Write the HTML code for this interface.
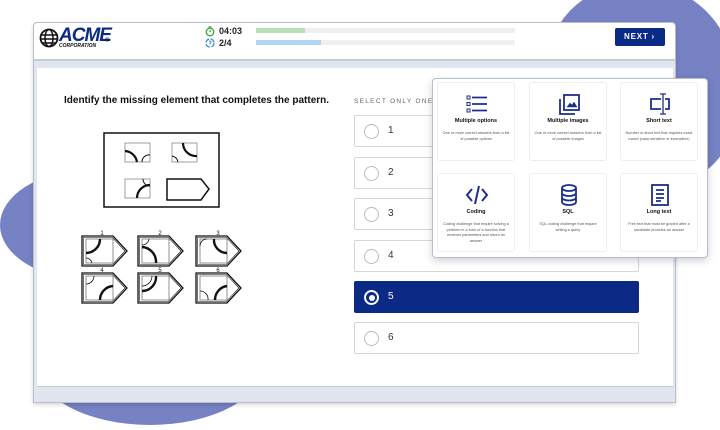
<!DOCTYPE html>
<html><head><style>
*{margin:0;padding:0;box-sizing:border-box}
body{width:720px;height:430px;overflow:hidden;background:#fff;font-family:"Liberation Sans",sans-serif;position:relative}
.abs{position:absolute}
.blob{position:absolute;background:#7682c4;border-radius:50%}
.opt{position:absolute;left:354px;width:285px;height:32px;border:1px solid #d6d6d6;border-radius:2px;background:#fff;font-size:10px;color:#333}
.opt .r{position:absolute;left:9px;top:8px;width:15px;height:15px;border:1.5px solid #bbb;border-radius:50%}
.opt span{position:absolute;left:33px;top:9px}
.card{position:absolute;width:78px;height:79px;border:1px solid #eceef2;border-radius:3px;background:#fff;text-align:center}
.card svg{position:absolute;left:27px;top:10px}
.card b{position:absolute;top:35px;left:0;right:0;font-size:5.5px;color:#111}
.card p{position:absolute;top:48px;left:4px;right:4px;font-size:3.8px;color:#555;line-height:5.5px}
</style></head><body>
<div class="blob" style="left:545px;top:-15px;width:190px;height:200px;border-radius:48% 52% 40% 60%"></div>
<div class="blob" style="left:0;top:170px;width:180px;height:110px"></div>
<div class="blob" style="left:35px;top:300px;width:230px;height:125px"></div>
<div class="abs" style="left:33px;top:22px;width:643px;height:381px;background:#e1e5ef;border:1px solid #b8bccb;border-radius:4px 4px 0 0;box-shadow:0 2px 4px rgba(0,0,0,.15)"></div>
<div class="abs" style="left:34px;top:23px;width:641px;height:38px;background:#fff;border-bottom:2px solid #c8cbd3;border-radius:4px 4px 0 0"></div>
<div class="abs" style="left:37px;top:68px;width:636px;height:319px;background:#fff;border-bottom:1px solid #c8c8c8"></div>
<svg class="abs" style="left:39px;top:28px" width="20" height="20" viewBox="0 0 20 20"><circle cx="10" cy="10" r="8.5" fill="none" stroke="#111" stroke-width="1.8"/><ellipse cx="10" cy="10" rx="4" ry="8.5" fill="none" stroke="#111" stroke-width="1.5"/><path d="M2 7H18M1.5 11H18.5M3 15H17" stroke="#111" stroke-width="1.5"/></svg>
<div class="abs" style="left:59px;top:25px;font:italic 900 19px 'Liberation Sans';color:#0b2a86;letter-spacing:-1px">ACME</div>
<div class="abs" style="left:105px;top:38px;font-size:6px;color:#111">®</div>
<div class="abs" style="left:59px;top:43px;font:italic bold 5px 'Liberation Sans';color:#111">CORPORATION</div>
<svg class="abs" style="left:205px;top:26px" width="10" height="11" viewBox="0 0 10 11"><circle cx="5" cy="6" r="3.8" fill="none" stroke="#3da23d" stroke-width="1.3"/><path d="M3.5 1H6.5M5 4V6" stroke="#3da23d" stroke-width="1.2"/></svg>
<div class="abs" style="left:219px;top:26px;font-size:9px;font-weight:bold;color:#222">04:03</div>
<svg class="abs" style="left:205px;top:38px" width="10" height="10" viewBox="0 0 10 10"><circle cx="5" cy="5" r="4" fill="none" stroke="#3c8fdc" stroke-width="1.3" stroke-dasharray="5 1.5"/><path d="M4 3.5Q5 2.5 6 3.5Q6 5 5 5.5V6.5" stroke="#3c8fdc" fill="none"/></svg>
<div class="abs" style="left:219px;top:38px;font-size:9px;font-weight:bold;color:#222">2/4</div>
<div class="abs" style="left:256px;top:28px;width:259px;height:5px;background:#f0f0f0"></div>
<div class="abs" style="left:256px;top:28px;width:49px;height:5px;background:#b9dfb4"></div>
<div class="abs" style="left:256px;top:40px;width:259px;height:5px;background:#f0f0f0"></div>
<div class="abs" style="left:256px;top:40px;width:65px;height:5px;background:#b0d4f6"></div>
<div class="abs" style="left:615px;top:28px;width:50px;height:18px;background:#0b2a86;border-radius:2px;color:#fff;font-size:8px;font-weight:bold;letter-spacing:.8px;line-height:18px;padding-left:9px">NEXT ›</div>
<div class="abs" style="left:64px;top:95px;font-size:10px;font-weight:bold;color:#111">Identify the missing element that completes the pattern.</div>
<div class="abs" style="left:354px;top:98px;font-size:6.5px;color:#666;letter-spacing:1.3px">SELECT ONLY ONE</div>
<svg class="abs" style="left:70px;top:125px" width="190" height="185" viewBox="0 0 190 185">
<defs><g id="t" fill="none"><path d="M0 0H31L45 15L31 30H0Z" stroke="#111" stroke-width="1.3"/><path d="M1.5 1.5H30.4L43 15L30.4 28.5H1.5Z" stroke="#111" stroke-width=".6"/><rect x="4" y="3" width="27" height="24" stroke="#888" stroke-width=".9"/></g></defs>
<g fill="none" stroke="#111">
<rect x="34" y="8" width="115" height="74" stroke-width="1.5"/>
<g stroke="#888" stroke-width=".8"><rect x="55" y="18" width="25" height="19"/><rect x="102" y="18" width="25" height="19"/><rect x="55" y="54" width="25" height="19"/></g>
<path d="M55 26A13 13 0 0 1 67 37" stroke-width="2.2"/><path d="M72 37A7 7 0 0 1 80 30"/>
<path d="M113 18A13 13 0 0 0 127 31" stroke-width="2.2"/><path d="M102 31A7 7 0 0 1 108 37"/>
<path d="M67 73A13 13 0 0 1 80 60" stroke-width="2.2"/><path d="M73 54A7 7 0 0 0 80 61"/>
<path d="M97 54H131L139 64L131 75H97Z" stroke-width="1.5"/>
</g>
<use href="#t" x="12" y="111"/><use href="#t" x="68" y="111"/><use href="#t" x="126" y="111"/>
<use href="#t" x="12" y="148"/><use href="#t" x="68" y="148"/><use href="#t" x="126" y="148"/>
<g fill="none" stroke="#111">
<path d="M30 114A14 14 0 0 1 16 128" stroke-width="2.4"/><path d="M16 133A6 6 0 0 1 22 138" stroke-width=".8"/>
<path d="M72 122A15 15 0 0 1 86 138" stroke-width="2.4"/><path d="M72 120A7 7 0 0 0 79 114" stroke-width=".8"/>
<path d="M144 114A13 13 0 0 0 157 128" stroke-width="2.4"/><path d="M130 121A7 7 0 0 1 137 114" stroke-width=".8"/>
<path d="M30 175A14 14 0 0 1 43 161" stroke-width="2.4"/><path d="M16 159A8 8 0 0 0 24 151" stroke-width=".8"/>
<path d="M86 151A14 14 0 0 1 72 166" stroke-width="2.4"/><path d="M82 151A10 10 0 0 1 72 161" stroke-width=".8"/>
<path d="M145 175A14 14 0 0 1 157 161" stroke-width="2.4"/><path d="M130 166A8 8 0 0 1 138 175" stroke-width=".8"/>
</g>
<g font-size="6" fill="#111" font-family="Liberation Sans" text-anchor="middle"><text x="32" y="110">1</text><text x="90" y="110">2</text><text x="148" y="110">3</text><text x="32" y="147">4</text><text x="90" y="147">5</text><text x="148" y="147">6</text></g>
</svg>
<div class="opt" style="top:115px"><div class="r"></div><span>1</span></div>
<div class="opt" style="top:157px"><div class="r"></div><span>2</span></div>
<div class="opt" style="top:198px"><div class="r"></div><span>3</span></div>
<div class="opt" style="top:240px"><div class="r"></div><span>4</span></div>
<div class="opt" style="top:281px;background:#0b2a86;border-color:#0b2a86;color:#fff"><div class="r" style="border:2px solid #fff"><div style="position:absolute;left:2.5px;top:2.5px;width:6px;height:6px;border-radius:50%;background:#fff"></div></div><span>5</span></div>
<div class="opt" style="top:322px"><div class="r"></div><span>6</span></div>
<div class="abs" style="left:432px;top:78px;width:276px;height:180px;background:#fff;border:1px solid #b8bdd4;border-radius:4px;box-shadow:0 3px 8px rgba(0,0,0,.18)"></div>
<div class="card" style="left:437px;top:82px"><svg width="24" height="22" viewBox="0 0 24 22" fill="none" stroke="#1c2f8a" stroke-width="1.8"><rect x="2" y="3" width="3" height="3" stroke-width="1"/><rect x="2" y="9.5" width="3" height="3" stroke-width="1"/><rect x="2" y="16" width="3" height="3" stroke-width="1"/><path d="M7 4.5H22M7 11H22M7 17.5H22"/></svg><b>Multiple options</b><p>One or more correct answers from a list of possible options</p></div>
<div class="card" style="left:529px;top:82px"><svg width="24" height="22" viewBox="0 0 24 22" fill="none" stroke="#1c2f8a" stroke-width="1.8"><rect x="7" y="2" width="15" height="15"/><path d="M3 6V21H18"/><path d="M10 14L13 10L15 12L17 9L20 14Z" fill="#1c2f8a" stroke-width=".5"/></svg><b>Multiple images</b><p>One or more correct answers from a list of possible images</p></div>
<div class="card" style="left:620px;top:82px"><svg width="24" height="22" viewBox="0 0 24 22" fill="none" stroke="#1c2f8a" stroke-width="1.8"><path d="M13 6H3V16H13M17 6H21V16H17"/><path d="M15 1V21M12 1H18M12 21H18" stroke-width="1.3"/></svg><b>Short text</b><p>Number or short text that requires exact match (case-sensitive or insensitive)</p></div>
<div class="card" style="left:437px;top:173px"><svg width="24" height="22" viewBox="0 0 24 22" fill="none" stroke="#1c2f8a" stroke-width="2"><path d="M7 5L2 11L7 17M17 5L22 11L17 17M14 2L10 20"/></svg><b>Coding</b><p>Coding challenge that require solving a problem in a form of a function that receives parameters and return an answer</p></div>
<div class="card" style="left:529px;top:173px"><svg width="24" height="22" viewBox="0 0 24 22" fill="none" stroke="#1c2f8a" stroke-width="1.8"><ellipse cx="12" cy="4" rx="7" ry="3"/><path d="M5 4V18A7 3 0 0 0 19 18V4M5 9A7 3 0 0 0 19 9M5 13.5A7 3 0 0 0 19 13.5"/></svg><b>SQL</b><p>SQL coding challenge that require writing a query</p></div>
<div class="card" style="left:620px;top:173px"><svg width="24" height="22" viewBox="0 0 24 22" fill="none" stroke="#1c2f8a" stroke-width="1.8"><rect x="4" y="1" width="16" height="20"/><path d="M8 6H16M8 10H16M8 14H16M8 17H13"/></svg><b>Long text</b><p>Free text that must be graded after a candidate provides an answer</p></div>
</body></html>
